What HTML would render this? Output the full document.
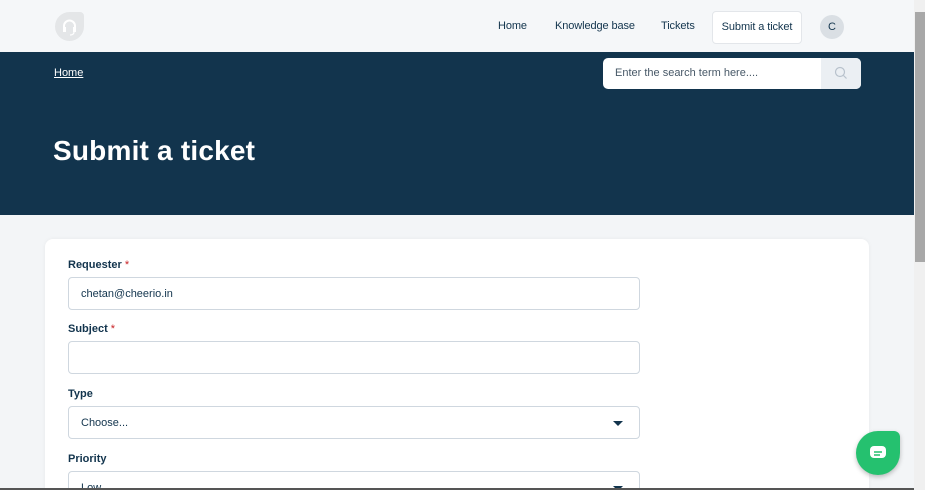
<!DOCTYPE html>
<html><head><meta charset="utf-8"><style>
*{box-sizing:border-box;margin:0;padding:0}
html,body{width:925px;height:490px;overflow:hidden}
body{background:#f3f5f7;font-family:"Liberation Sans",sans-serif;color:#12344d;position:relative}
.hdr{position:absolute;left:0;top:0;width:914px;height:52px;background:#f5f7f9}
.logo{position:absolute;left:55px;top:12px;width:29px;height:29px;background:#e4e6e8;border-radius:50%;border-top-right-radius:4px}
.nav{position:absolute;top:20px;font-size:11px;color:#12344d;letter-spacing:-0.1px}
.btn{position:absolute;left:712px;top:11px;width:90px;height:33px;background:#fff;border:1px solid #e3e6ea;border-radius:4px;font-size:11px;text-align:center;line-height:31px;letter-spacing:-0.1px}
.av{position:absolute;left:820px;top:15px;width:24px;height:24px;border-radius:50%;background:#dadfe4;font-size:11px;text-align:center;line-height:24px}
.ban{position:absolute;left:0;top:52px;width:914px;height:163px;background:#12344d}
.crumb{position:absolute;left:54px;top:15px;color:#fff;font-size:11px;text-decoration:underline}
.srch{position:absolute;left:603px;top:6px;width:258px;height:31px;background:#fff;border-radius:5px;overflow:hidden}
.srch span{position:absolute;left:12px;top:9px;font-size:11px;color:#475867}
.srch i{position:absolute;right:0;top:0;width:40px;height:31px;background:#ebeff3}
h1{position:absolute;left:53px;top:83px;color:#fff;font-size:28px;font-weight:bold;letter-spacing:0.2px}
.card{position:absolute;left:45px;top:239px;width:824px;height:270px;background:#fff;border-radius:8px;box-shadow:0 0 4px rgba(0,0,0,.05)}
.lbl{position:absolute;left:68px;font-size:11px;font-weight:bold;color:#12344d}
.lbl b{color:#c82124;font-weight:normal}
.inp{position:absolute;left:68px;width:572px;height:33px;border:1px solid #cfd7df;border-radius:4px;background:#fff;font-size:11px;padding:10px 12px;color:#12344d}
.car{position:absolute;right:16px;top:14px;border-left:5px solid transparent;border-right:5px solid transparent;border-top:5px solid #12344d}
.sb{position:absolute;left:914px;top:0;width:11px;height:490px;background:#f0f0f0}
.sb i{position:absolute;left:1px;top:12px;width:10px;height:250px;background:#a8a8a8}
.chat{position:absolute;left:856px;top:431px;width:44px;height:44px;background:#25c16f;border-radius:50%;border-top-right-radius:6px;box-shadow:0 2px 5px rgba(0,0,0,.25)}
.chat i{position:absolute;left:14px;top:15px;width:16px;height:12px;background:#fff;border-radius:4px}
.bb{position:absolute;left:0;top:488px;width:914px;height:2px;background:#555}
</style></head><body>
<div class="hdr">
<div class="logo"><svg width="29" height="29" viewBox="0 0 29 29"><path d="M9 17v-3a5.5 5.5 0 0 1 11 0v3" stroke="#fff" stroke-width="2" fill="none"/><rect x="8" y="15" width="3" height="5" fill="#fff"/><rect x="18" y="15" width="3" height="5" fill="#fff"/><path d="M19 20q0 3-4 3" stroke="#fff" stroke-width="1.2" fill="none"/></svg></div>
<div class="nav" style="left:498px">Home</div>
<div class="nav" style="left:555px">Knowledge base</div>
<div class="nav" style="left:661px">Tickets</div>
<div class="btn">Submit a ticket</div>
<div class="av">C</div>
</div>
<div class="ban">
<div class="crumb">Home</div>
<div class="srch"><span>Enter the search term here....</span><i><svg width="40" height="31"><circle cx="19" cy="14" r="4.5" stroke="#b8c2cc" fill="none" stroke-width="1.2"/><path d="M22.5 17.5l3 3" stroke="#b8c2cc" stroke-width="1.2"/></svg></i></div>
<h1>Submit a ticket</h1>
</div>
<div class="card"></div>
<div class="lbl" style="top:259px">Requester <b>*</b></div>
<div class="inp" style="top:277px">chetan@cheerio.in</div>
<div class="lbl" style="top:323px">Subject <b>*</b></div>
<div class="inp" style="top:341px"></div>
<div class="lbl" style="top:388px">Type</div>
<div class="inp" style="top:406px">Choose...<span class="car"></span></div>
<div class="lbl" style="top:453px">Priority</div>
<div class="inp" style="top:471px">Low<span class="car"></span></div>
<div class="chat"><i><svg width="16" height="12"><path d="M4 5h8M4 8h6" stroke="#25c16f" stroke-width="1.5"/></svg></i></div>
<div class="sb"><i></i></div>
<div class="bb"></div>
</body></html>
